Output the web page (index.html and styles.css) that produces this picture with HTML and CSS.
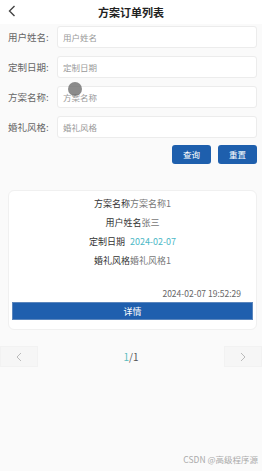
FILE: index.html
```html
<!DOCTYPE html>
<html lang="zh">
<head>
<meta charset="utf-8">
<title>方案订单列表</title>
<link rel="stylesheet" href="styles.css">
</head>
<body>
<div class="page">
  <header class="header">
    <svg class="back" width="8" height="12" viewBox="0 0 8 12"><path d="M6.5 1 L1.5 6 L6.5 11" fill="none" stroke="#444" stroke-width="1.4"/></svg>
    <h1 class="title">方案订单列表</h1>
  </header>
  <form class="form">
    <div class="row"><label class="label">用户姓名:</label><div class="input">用户姓名</div></div>
    <div class="row"><label class="label">定制日期:</label><div class="input">定制日期</div></div>
    <div class="row"><label class="label">方案名称:</label><div class="input">方案名称</div></div>
    <div class="row"><label class="label">婚礼风格:</label><div class="input">婚礼风格</div></div>
    <div class="actions"><span class="btn">查询</span><span class="btn">重置</span></div>
  </form>
  <section class="card">
    <div class="line"><span class="k">方案名称</span><span class="v">方案名称1</span></div>
    <div class="line"><span class="k">用户姓名</span><span class="v">张三</span></div>
    <div class="line"><span class="k">定制日期</span><span class="date">2024-02-07</span></div>
    <div class="line"><span class="k">婚礼风格</span><span class="v">婚礼风格1</span></div>
    <div class="time">2024-02-07 19:52:29</div>
    <div class="detail">详情</div>
  </section>
  <nav class="pager">
    <span class="pbtn"><svg width="6" height="10" viewBox="0 0 6 10"><path d="M5 1 L1 5 L5 9" fill="none" stroke="#bbb" stroke-width="1"/></svg></span>
    <span class="pnum"><span class="cur">1</span>/1</span>
    <span class="pbtn"><svg width="6" height="10" viewBox="0 0 6 10"><path d="M1 1 L5 5 L1 9" fill="none" stroke="#bbb" stroke-width="1"/></svg></span>
  </nav>
  <div class="touch"></div>
  <div class="mark">CSDN @高级程序源</div>
</div>
</body>
</html>
```
FILE: styles.css
```css
html, body {
  margin: 0;
  padding: 0;
}
body {
  font-family: "Noto Sans CJK SC", "Noto Sans", "Liberation Sans", sans-serif;
  background: #fafafa;
  color: #333;
}
.page {
  position: relative;
  width: 262px;
  height: 471px;
  overflow: hidden;
}
.header {
  height: 24px;
  background: #fff;
  display: flex;
  align-items: center;
  justify-content: center;
  position: relative;
}
.back {
  position: absolute;
  left: 8px;
  top: 5px;
}
.title {
  margin: 0;
  font-size: 11px;
  font-weight: bold;
  color: #222;
  line-height: 24px;
}
.form {
  padding: 2px 5px 0 8px;
  display: flex;
  flex-direction: column;
  gap: 8px;
}
.row {
  display: flex;
  align-items: center;
  height: 22px;
}
.label {
  width: 49px;
  font-size: 9.5px;
  color: #666;
}
.input {
  flex: 1;
  height: 22px;
  box-sizing: border-box;
  background: #fff;
  border: 1px solid #ececec;
  border-radius: 3px;
  font-size: 8.5px;
  color: #999;
  line-height: 20px;
  padding-left: 5px;
}
.actions {
  display: flex;
  justify-content: flex-end;
  gap: 7px;
  margin-top: -1px;
}
.btn {
  width: 39px;
  height: 19px;
  background: #1e5fad;
  border-radius: 3px;
  color: #fff;
  font-size: 8.5px;
  line-height: 19px;
  text-align: center;
}
.card {
  margin: 26px 5px 0 8px;
  background: #fff;
  border: 1px solid #f0f0f0;
  border-radius: 6px;
  padding: 3px 3px 9px 3px;
  font-size: 9px;
}
.line {
  height: 19px;
  line-height: 19px;
  text-align: center;
}
.k {
  color: #333;
}
.v {
  color: #777;
}
.date {
  color: #4bb8c6;
  margin-left: 5px;
}
.time {
  margin-top: 14px;
  height: 19px;
  line-height: 19px;
  text-align: right;
  padding-right: 12px;
  color: #666;
  font-size: 8.5px;
}
.detail {
  margin-top: -1px;
  height: 18px;
  line-height: 18px;
  background: #1f5fae;
  border: 1px solid #5b86bd;
  box-sizing: border-box;
  color: #fff;
  text-align: center;
  font-size: 9px;
}
.pager {
  margin-top: 16px;
  display: flex;
  justify-content: space-between;
  align-items: center;
  height: 21px;
}
.pbtn {
  width: 38px;
  height: 21px;
  background: #f6f6f6;
  border: 1px solid #f2f2f2;
  box-sizing: border-box;
  display: flex;
  align-items: center;
  justify-content: center;
}
.pnum {
  font-size: 10px;
  color: #555;
}
.cur {
  color: #5bbcc0;
}
.touch {
  position: absolute;
  left: 68px;
  top: 82px;
  width: 14px;
  height: 14px;
  border-radius: 50%;
  background: rgba(110, 110, 110, 0.8);
}
.mark {
  position: absolute;
  right: 4px;
  bottom: 6px;
  font-size: 8.5px;
  color: #aaa;
}
```
